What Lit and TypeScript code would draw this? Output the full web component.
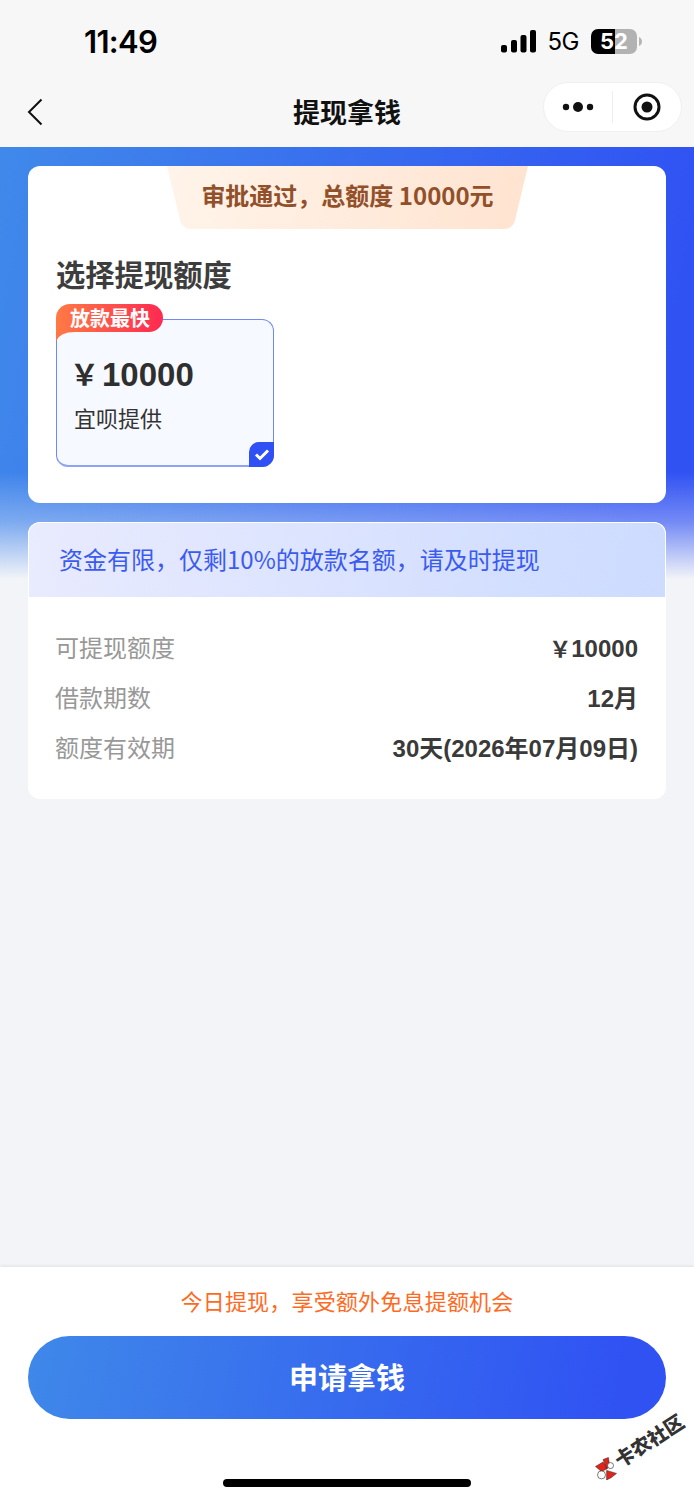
import { LitElement, html, css } from "lit";
import { customElement } from "lit/decorators.js";

@customElement("app-root")
export class AppRoot extends LitElement {
  static styles = css`
    :host { display: block; width: 694px; height: 1500px; font-family: "Liberation Sans", "Noto Sans CJK SC", sans-serif; color: #333; }
    * { box-sizing: border-box; }
    .page { position: relative; height: 1500px; display: flex; flex-direction: column; overflow: hidden; background: #f2f4f8; }
    .head { background: #f7f7f7; height: 147px; flex: none; display: flex; flex-direction: column; }
    .status { height: 77px; display: flex; align-items: center; justify-content: space-between; padding: 5px 52px 0 84px; color: #000; }
    .time { font-family: Inter, sans-serif; font-size: 31px; font-weight: 600; letter-spacing: -0.7px; }
    .sys { display: flex; align-items: center; gap: 12px; margin-left: -1px; }
    .net { font-family: Inter, sans-serif; font-size: 24px; font-weight: 400; letter-spacing: -0.5px; }
    .batt { display: flex; align-items: center; gap: 2px; }
    .cell { width: 46px; height: 25px; border-radius: 7px; display: flex; align-items: center; justify-content: center; font-family: Inter, sans-serif; font-size: 22px; font-weight: 700; color: #fff; background: linear-gradient(to right, #000 52%, #b2b2b2 52%); }
    .nav { flex: 1; display: grid; grid-template-columns: 139px 1fr 139px; align-items: center; padding: 0 12px; }
    .title { font-size: 27px; font-weight: 700; color: #111; font-family: "Noto Sans CJK SC", sans-serif; line-height: 1; margin-top: -1px; text-align: center; }
    .capsule { justify-self: end; width: 139px; height: 50px; border-radius: 25px; background: #fff; border: 1px solid #f0f0f0; display: grid; grid-template-columns: 1fr 1px 1fr; align-items: center; justify-items: center; margin-top: -10px; }
    .capsule i { width: 1px; height: 32px; background: #eee; }
    .nav svg.back { display: block; margin: -1px 0 0 15px; }
    main { flex: 1; padding: 19px 28px 0; display: flex; flex-direction: column; gap: 19px;
      background: linear-gradient(to bottom, rgba(242,244,248,0) 325px, rgba(242,244,248,0.35) 375px, #f2f4f8 432px), linear-gradient(100deg, #4089ea, #3052f3 92%); background-repeat: no-repeat; background-size: 100% 432px; }
    .card { background: #fff; border-radius: 12px; }
    .first { height: 337px; padding: 0 28px; display: flex; flex-direction: column; }
    .banner { align-self: center; width: 361px; height: 63px; flex: none; display: flex; align-items: center; justify-content: center; padding-bottom: 6px; font-size: 24px; font-weight: 700; color: #92502a; background: linear-gradient(100deg, #fff4ea, #ffe3d0); clip-path: path("M0 0H361L348 54Q346 63 336 63H25Q15 63 13 54Z"); font-family: "Noto Sans CJK SC", sans-serif; margin-left: 1px; }
    .first h2 { margin: 26px 0 0; font-size: 29.3px; line-height: 36px; font-weight: 700; color: #3d3d3d; font-family: "Noto Sans CJK SC", sans-serif; }
    .amount { position: relative; margin-top: 28px; width: 218px; height: 148px; border: 1px solid #7189f3; border-bottom: 2px solid #8ea2f6; border-radius: 12px; background: #f6f9ff; padding: 36px 0 0 18px; }
    .tag { position: absolute; left: -1px; top: -16px; width: 107px; height: 28px; border-radius: 14px 14px 14px 0; background: linear-gradient(90deg, #ff7a45, #ff2951); color: #fff; font-size: 20px; font-weight: 700; display: flex; align-items: center; justify-content: center; font-family: "Noto Sans CJK SC", sans-serif; padding-left: 1px; padding-bottom: 2px; }
    .tagfold { position: absolute; left: -1px; top: 12px; width: 19px; height: 9px; background: #ff7646; clip-path: path("M0 0H19Q4 0 0 9Z"); }
    .money { font-size: 33px; line-height: 38px; font-weight: 700; color: #2f2f2f; display: flex; align-items: baseline; gap: 3px; }
    .money small { font-size: 29px; margin-left: -5px; }
    .src { margin-top: 7px; margin-left: -1px; font-size: 22px; line-height: 30px; color: #333; font-family: "Noto Sans CJK SC", sans-serif; }
    .tick { position: absolute; right: -1px; bottom: -2px; width: 25px; height: 25px; background: #2f50f5; border-radius: 10px 0 12px 0; display: grid; place-items: center; }
    .second { height: 277px; overflow: hidden; }
    .notice { height: 75px; display: flex; align-items: center; padding: 0 0 4px 30px; font-size: 24px; color: #3b5bf0; background: linear-gradient(100deg, #e9ebfe, #ccdbff); border: 1.5px solid #fff; border-bottom: 0; border-radius: 12px 12px 0 0; font-family: "Noto Sans CJK SC", sans-serif; }
    .rows { padding: 24px 28px 0 27px; display: flex; flex-direction: column; gap: 0; }
    .row { height: 50px; display: flex; align-items: center; justify-content: space-between; font-size: 24px; }
    .row span { color: #989898; font-family: "Noto Sans CJK SC", sans-serif; }
    .row b { color: #3a3a3a; font-weight: 700; margin-top: 1px; }
    .row b small { font-size: 22px; }
    footer { flex: none; height: 233px; background: #fff; box-shadow: 0 -1px 3px rgba(0,0,0,.08); display: flex; flex-direction: column; align-items: center; padding: 0 28px; }
    .promo { margin-top: 17px; font-size: 22px; letter-spacing: .2px; line-height: 32px; color: #ff6a1f; font-family: "Noto Sans CJK SC", sans-serif; }
    .btn { margin-top: 20px; width: 100%; height: 83px; border-radius: 42px; background: linear-gradient(100deg, #3f88e9, #3052f3 92%); color: #fff; font-size: 29px; font-weight: 700; display: flex; align-items: center; justify-content: center; padding-bottom: 4px; font-family: "Noto Sans CJK SC", sans-serif; }
    .home { margin-top: 60px; width: 248px; height: 8px; border-radius: 4px; background: #000; }
    .mark { position: absolute; left: 594px; top: 1456px; display: flex; align-items: center; gap: 0; transform: rotate(-33deg); transform-origin: 12px 50%; font-size: 19.5px; font-weight: 900; color: #333; white-space: nowrap; font-family: "Noto Sans CJK SC", sans-serif; line-height: 1; }
    .mark svg { transform: rotate(33deg); flex: none; }
  `;

  render() {
    return html`<div class="page">
      <div class="head">
        <div class="status">
          <div class="time">11:49</div>
          <div class="sys">
            <svg width="35" height="23" viewBox="0 0 35 23"><g fill="#000">
              <rect x="0" y="15" width="6" height="7.5" rx="2"/><rect x="10" y="10" width="6" height="12.5" rx="2"/><rect x="19.5" y="5" width="6" height="17.5" rx="2"/><rect x="29" y="0" width="6" height="22.5" rx="2"/></g></svg>
            <div class="net">5G</div>
            <div class="batt"><div class="cell">52</div>
              <svg width="3" height="9" viewBox="0 0 3 9"><path d="M0 0Q3 1.5 3 4.5T0 9Z" fill="#b5b5b5"/></svg></div>
          </div>
        </div>
        <div class="nav">
          <svg class="back" width="16" height="28" viewBox="0 0 16 28" fill="none"><path d="M14.5 1.5 2 14l12.5 12.5" stroke="#111" stroke-width="2"/></svg>
          <div class="title">提现拿钱</div>
          <div class="capsule">
            <svg width="32" height="14" viewBox="0 0 32 14"><circle cx="4" cy="7" r="3.2" fill="#111"/><circle cx="16" cy="7" r="5" fill="#111"/><circle cx="28" cy="7" r="3.2" fill="#111"/></svg>
            <i></i>
            <svg width="28" height="28" viewBox="0 0 28 28" fill="none"><circle cx="14" cy="14" r="12" stroke="#111" stroke-width="3"/><circle cx="14" cy="14" r="5.5" fill="#111"/></svg>
          </div>
        </div>
      </div>
      <main>
        <section class="card first">
          <div class="banner">审批通过，总额度 10000元</div>
          <h2>选择提现额度</h2>
          <div class="amount">
            <div class="tagfold"></div>
            <div class="tag">放款最快</div>
            <div class="money"><small>￥</small>10000</div>
            <div class="src">宜呗提供</div>
            <div class="tick"><svg width="16" height="13" viewBox="0 0 16 13" fill="none"><path d="M2 6.5 6 10.5 14 2.5" stroke="#fff" stroke-width="3"/></svg></div>
          </div>
        </section>
        <section class="card second">
          <div class="notice">资金有限，仅剩10%的放款名额，请及时提现</div>
          <div class="rows">
            <div class="row"><span>可提现额度</span><b><small>￥</small>10000</b></div>
            <div class="row"><span>借款期数</span><b>12月</b></div>
            <div class="row"><span>额度有效期</span><b>30天(2026年07月09日)</b></div>
          </div>
        </section>
      </main>
      <footer>
        <div class="promo">今日提现，享受额外免息提额机会</div>
        <div class="btn">申请拿钱</div>
        <div class="home"></div>
      </footer>
      <div class="mark">
        <svg width="24" height="24" viewBox="0 0 24 24"><g fill="#e2231a" stroke="#222" stroke-width=".5"><path d="M1.5 10.5 9 6l4.5 6.6-6 3z"/><path d="M9 3.6 14.4 1.5l1.2 7.5-3 3.6z"/><path d="M12.6 14.4 22.5 17.4l-5.1 4.2-4.8 2.4z"/></g><circle cx="16.5" cy="9.6" r="3" fill="#fff" stroke="#222" stroke-width=".6"/><circle cx="7.5" cy="18.9" r="4" fill="#fff" stroke="#222" stroke-width=".6"/></svg>
        <span>卡农社区</span>
      </div>
    </div>`;
  }
}
